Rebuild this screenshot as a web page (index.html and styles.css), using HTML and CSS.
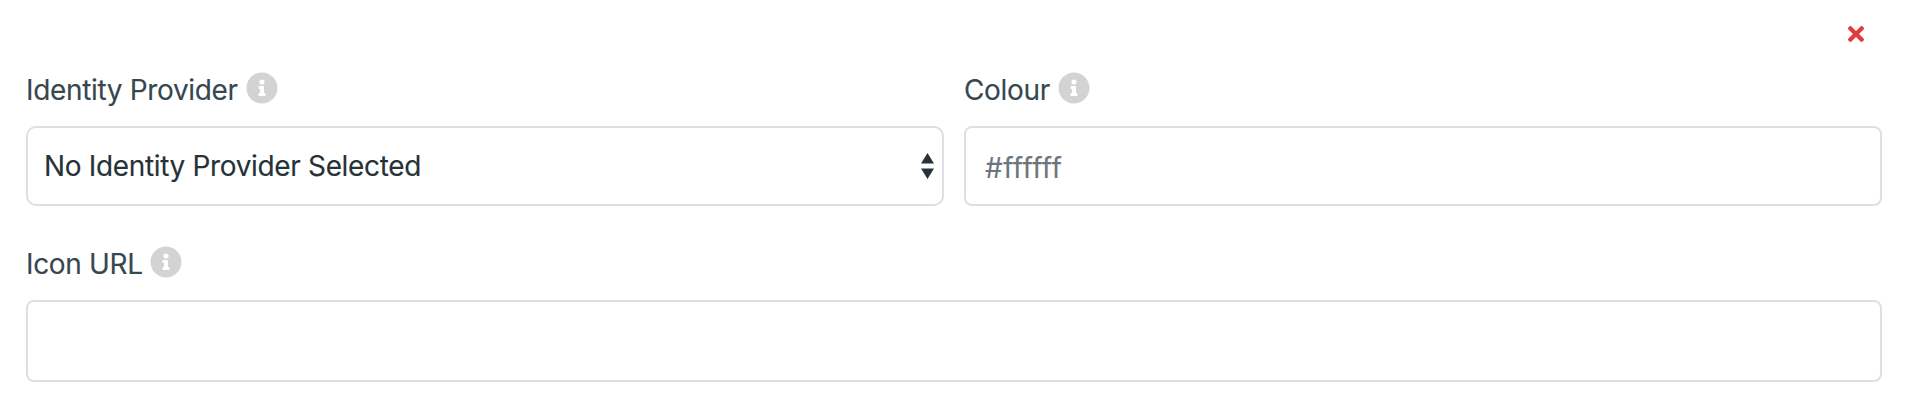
FILE: index.html
```html
<!DOCTYPE html>
<html lang="en">
<head>
<meta charset="utf-8">
<title>Identity Provider</title>
<link rel="stylesheet" href="styles.css">
</head>
<body>
<svg class="defs" aria-hidden="true">
  <symbol id="info" viewBox="0 0 512 512"><path d="M256 8C119.043 8 8 119.083 8 256c0 136.997 111.043 248 248 248s248-111.003 248-248C504 119.083 392.957 8 256 8zm0 110c23.196 0 42 18.804 42 42s-18.804 42-42 42-42-18.804-42-42 18.804-42 42-42zm56 254c0 6.627-5.373 12-12 12h-88c-6.627 0-12-5.373-12-12v-24c0-6.627 5.373-12 12-12h12v-64h-12c-6.627 0-12-5.373-12-12v-24c0-6.627 5.373-12 12-12h64c6.627 0 12 5.373 12 12v100h12c6.627 0 12 5.373 12 12v24z"/></symbol>
</svg>
<form class="form">
  <div class="toolbar">
    <svg class="remove" viewBox="0 0 352 352"><path d="M242.72 176l100.07-100.07c12.28-12.28 12.28-32.19 0-44.48l-22.24-22.24c-12.28-12.28-32.19-12.28-44.48 0L176 109.28 75.93 9.21c-12.28-12.28-32.19-12.28-44.48 0L9.21 31.45c-12.28 12.28-12.28 32.19 0 44.48L109.28 176 9.21 276.07c-12.28 12.28-12.28 32.19 0 44.48l22.24 22.24c12.28 12.28 32.2 12.28 44.48 0L176 242.72l100.07 100.07c12.28 12.28 32.2 12.28 44.48 0l22.24-22.24c12.28-12.28 12.28-32.19 0-44.48L242.72 176z"/></svg>
  </div>
  <div class="row">
    <div class="field">
      <div class="label"><span class="label-text provider">Identity Provider</span><svg class="info"><use href="#info"/></svg></div>
      <div class="control select">
        <span class="value">No Identity Provider Selected</span>
        <svg class="arrows" viewBox="0 0 13 26"><path d="M6.5 0 13 10.5H0zM0 15.5h13L6.5 26z"/></svg>
      </div>
    </div>
    <div class="field">
      <div class="label"><span class="label-text colour">Colour</span><svg class="info"><use href="#info"/></svg></div>
      <div class="control input"><span class="placeholder">#ffffff</span></div>
    </div>
  </div>
  <div class="field">
    <div class="label"><span class="label-text url">Icon URL</span><svg class="info"><use href="#info"/></svg></div>
    <div class="control url-input"></div>
  </div>
</form>
</body>
</html>
```
FILE: styles.css
```css
* { box-sizing: border-box; }
body { margin: 0; background: #fff; font-family: Inter, "Liberation Sans", sans-serif; font-size: 28px; letter-spacing: -0.34px; -webkit-text-stroke: 0.12px currentColor; color: #36474f; }
.defs { position: absolute; width: 0; height: 0; }
.form { padding: 0 26px; }
.toolbar { display: flex; justify-content: flex-end; height: 68px; padding: 26px 18px 0 0; }
.remove { width: 16px; height: 16px; fill: #e03c39; }
.row { display: grid; grid-template-columns: 918px 918px; gap: 20px; margin-bottom: 36px; }
.label { display: flex; height: 58px; padding-top: 4px; }
.label-text { line-height: 37px; white-space: nowrap; }
.provider { width: 220px; }
.colour { width: 94px; }
.url { width: 124px; }
.info { width: 32px; height: 32px; fill: #d3d3d3; }
.control { display: flex; align-items: center; border: 2px solid #dce0e5; border-radius: 10px; background: #fff; }
.select { height: 80px; padding: 0 8px 0 16px; justify-content: space-between; color: #263238; }
.arrows { width: 13px; height: 26px; fill: #263238; }
.value, .placeholder { line-height: 36px; white-space: nowrap; }
.input { height: 80px; padding: 4px 20px 0 19px; color: #6c757d; border-radius: 8px; }
.placeholder { letter-spacing: 0.4px; }
.url-input { height: 82px; border-radius: 8px; }
```
